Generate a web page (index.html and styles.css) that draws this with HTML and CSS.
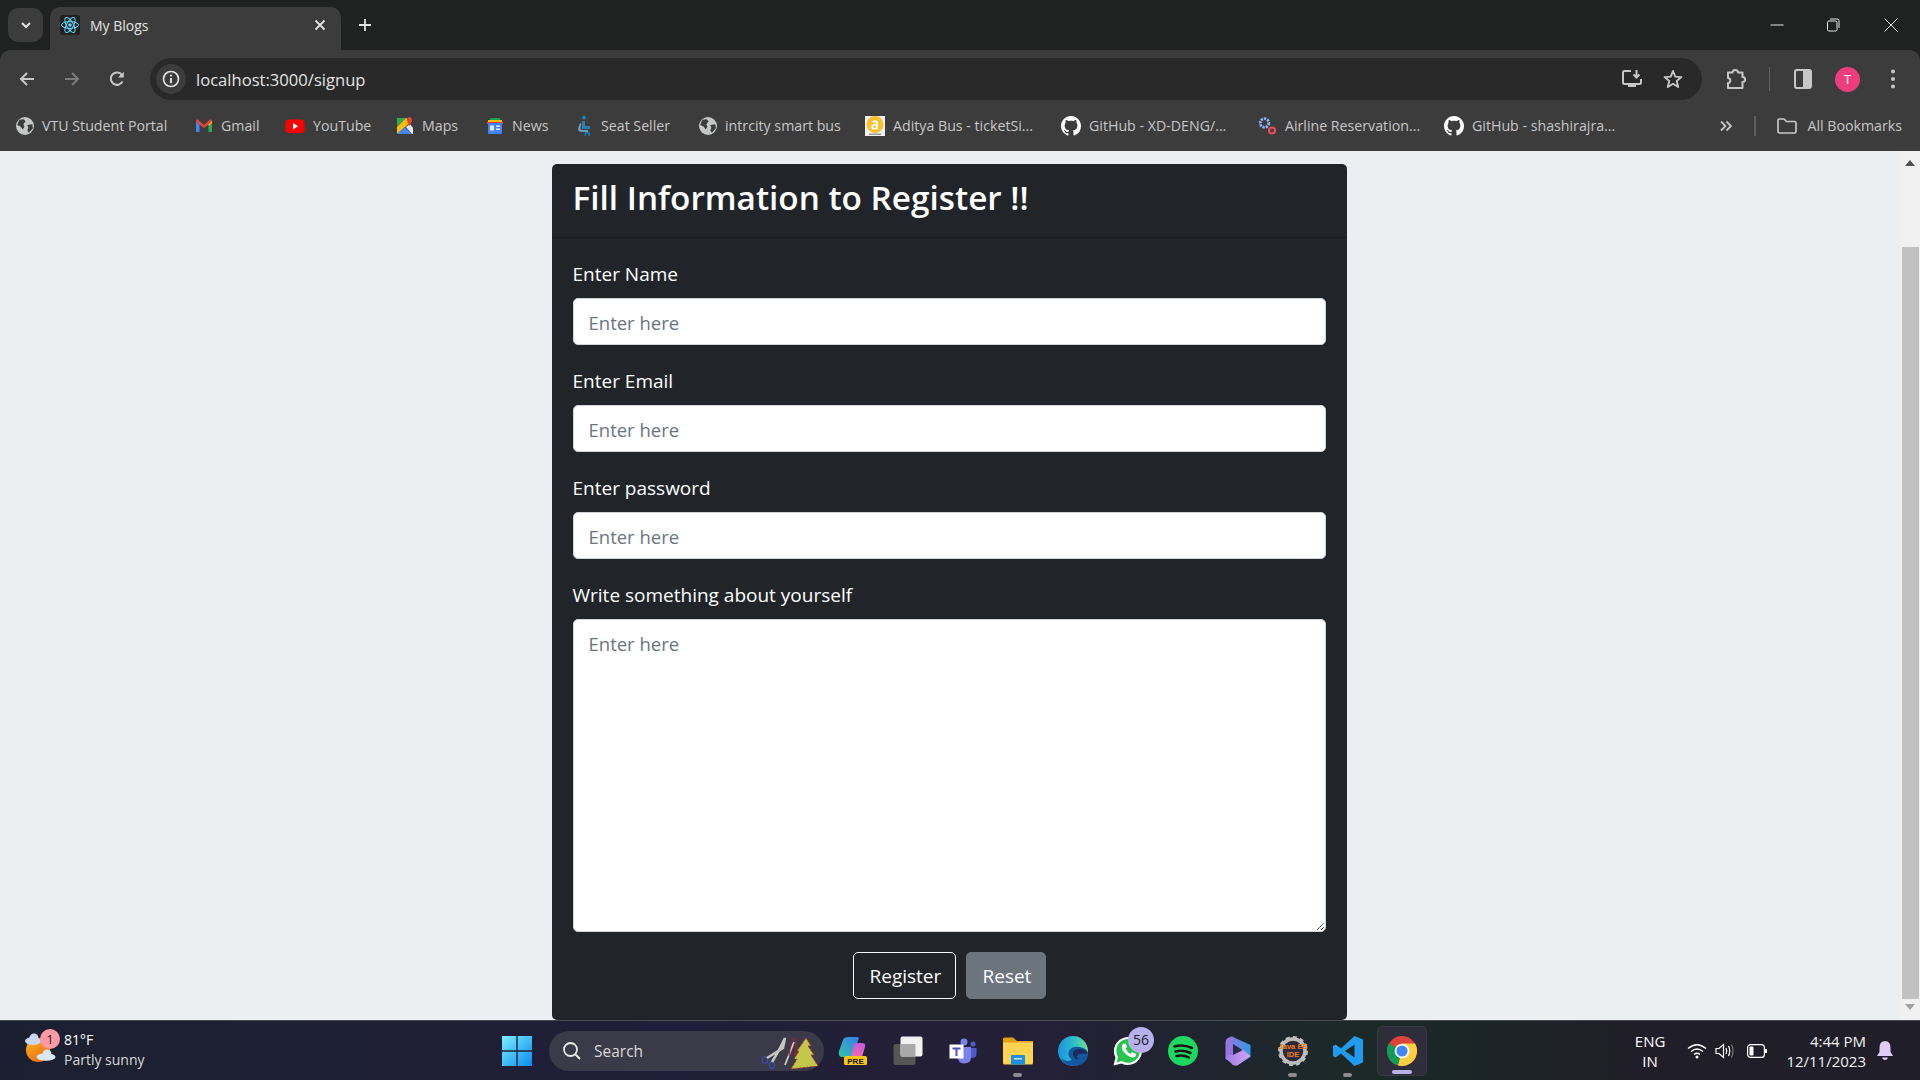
FILE: index.html
```html
<!DOCTYPE html>
<html>
<head>
<title>My Blogs</title>
<link rel="stylesheet" href="styles.css">
</head>
<body>
<svg class="defs" width="0" height="0">
	<symbol id="globe" viewBox="0 0 16 16">
		<circle cx="8" cy="8" r="8" fill="#c4c7c5"/>
		<path d="M3 2.5 L7 2 L8.5 4 L6.5 6.5 L7.5 8.5 L6 11 L4 8.5 L1 7 Z M10 7 L14.5 6.5 L15 10 L11.5 14 L10 12 L11 9.5 Z" fill="#3c3c3c"/>
	</symbol>
	<symbol id="github" viewBox="0 0 16 16">
		<path fill="#fff" d="M8 0C3.58 0 0 3.58 0 8c0 3.54 2.29 6.53 5.47 7.59.4.07.55-.17.55-.38 0-.19-.01-.82-.01-1.49-2.01.37-2.53-.49-2.69-.94-.09-.23-.48-.94-.82-1.13-.28-.15-.68-.52-.01-.53.63-.01 1.08.58 1.23.82.72 1.21 1.87.87 2.33.66.07-.52.28-.87.51-1.07-1.78-.2-3.64-.89-3.64-3.95 0-.87.31-1.59.82-2.15-.08-.2-.36-1.02.08-2.12 0 0 .67-.21 2.2.82.64-.18 1.32-.27 2-.27s1.36.09 2 .27c1.53-1.04 2.2-.82 2.2-.82.44 1.1.16 1.92.08 2.12.51.56.82 1.27.82 2.15 0 3.07-1.87 3.75-3.65 3.95.29.25.54.73.54 1.48 0 1.07-.01 1.93-.01 2.2 0 .21.15.46.55.38A8.01 8.01 0 0 0 16 8c0-4.42-3.58-8-8-8z"/>
	</symbol>
</svg>

<div class="tabstrip">
	<div class="tab-search">
		<svg width="14" height="14" viewBox="0 0 14 14"><path d="M3 5 L7 9 L11 5" fill="none" stroke="#e3e3e3" stroke-width="2"/></svg>
	</div>
	<div class="tab">
		<svg class="tab-icon" width="20" height="20" viewBox="0 0 20 20">
			<rect width="20" height="20" rx="2" fill="#222"/>
			<g fill="none" stroke="#61dafb" stroke-width="1">
				<ellipse cx="10" cy="10" rx="8.5" ry="3.4"/>
				<ellipse cx="10" cy="10" rx="8.5" ry="3.4" transform="rotate(60 10 10)"/>
				<ellipse cx="10" cy="10" rx="8.5" ry="3.4" transform="rotate(120 10 10)"/>
			</g>
			<circle cx="10" cy="10" r="1.8" fill="#61dafb"/>
		</svg>
		<span class="tab-title">My Blogs</span>
		<svg class="tab-close" width="12" height="12" viewBox="0 0 12 12"><path d="M1.5 1.5 L10.5 10.5 M10.5 1.5 L1.5 10.5" stroke="#e3e3e3" stroke-width="1.8"/></svg>
	</div>
	<svg class="new-tab" width="14" height="14" viewBox="0 0 14 14"><path d="M7 1 V13 M1 7 H13" stroke="#e3e3e3" stroke-width="1.8"/></svg>
	<div class="win-controls">
		<svg width="14" height="14" viewBox="0 0 14 14"><path d="M0.5 7 H13.5" stroke="#e8e8e8" stroke-width="1"/></svg>
		<svg width="14" height="14" viewBox="0 0 14 14"><rect x="1.5" y="3" width="9.5" height="10" rx="1.5" fill="none" stroke="#e8e8e8"/><path d="M4 1 H11.5 Q13 1 13 2.5 V10" fill="none" stroke="#e8e8e8"/></svg>
		<svg class="win-close" width="14" height="14" viewBox="0 0 14 14"><path d="M0.5 0.5 L13.5 13.5 M13.5 0.5 L0.5 13.5" stroke="#e8e8e8" stroke-width="1"/></svg>
	</div>
</div>

<div class="toolbar">
	<div class="nav-btns">
		<svg width="18" height="18" viewBox="0 0 18 18"><path d="M16 9 H3 M9 3 L3 9 L9 15" fill="none" stroke="#c7c7c7" stroke-width="2"/></svg>
		<svg width="18" height="18" viewBox="0 0 18 18"><path d="M2 9 H15 M9 3 L15 9 L9 15" fill="none" stroke="#7b7b7b" stroke-width="2"/></svg>
		<svg width="18" height="18" viewBox="0 0 18 18"><path d="M14.5 11.5 A6.2 6.2 0 1 1 14 5" fill="none" stroke="#c7c7c7" stroke-width="2"/><path d="M15.8 1.8 V7.5 H10" fill="#c7c7c7"/></svg>
	</div>
	<div class="omnibox">
		<span class="site-info">
			<svg width="18" height="18" viewBox="0 0 18 18"><circle cx="9" cy="9" r="7.5" fill="none" stroke="#e3e3e3" stroke-width="1.7"/><path d="M9 8 V13.2" stroke="#e3e3e3" stroke-width="1.9"/><circle cx="9" cy="5.5" r="1.1" fill="#e3e3e3"/></svg>
		</span>
		<span class="url">localhost:3000/signup</span>
		<span class="omni-icons">
			<svg width="22" height="22" viewBox="0 0 22 22"><path d="M10 3 H3.5 Q2 3 2 4.5 V14.5 Q2 16 3.5 16 H18.5 Q20 16 20 14.5 V11" fill="none" stroke="#c7c7c7" stroke-width="2"/><path d="M7 19 H15 V16.5 H7 Z" fill="#c7c7c7"/><path d="M15.5 2 V9 M12.5 6.5 L15.5 9.5 L18.5 6.5" fill="none" stroke="#c7c7c7" stroke-width="2"/></svg>
			<svg width="20" height="20" viewBox="0 0 20 20"><path d="M10 2 L12.3 7.6 L18.4 8.1 L13.7 12 L15.2 18 L10 14.8 L4.8 18 L6.3 12 L1.6 8.1 L7.7 7.6 Z" fill="none" stroke="#c7c7c7" stroke-width="1.9" stroke-linejoin="round"/></svg>
		</span>
	</div>
	<div class="tool-icons">
		<svg class="ti-ext" width="20" height="22" viewBox="0 0 20 22"><path d="M2 4.5 H6.5 C6.5 1 12 1 12 4.5 H16.5 V9 C20 9 20 14 16.5 14 V20 H2 V15 C5 15 5 10 2 10 Z" fill="none" stroke="#c7c7c7" stroke-width="2" stroke-linejoin="round"/></svg>
		<span class="ti-sep"></span>
		<svg class="ti-panel" width="18" height="20" viewBox="0 0 18 20"><rect x="1" y="1" width="16" height="18" rx="2" fill="none" stroke="#c7c7c7" stroke-width="2"/><rect x="9" y="1" width="8" height="18" fill="#c7c7c7"/></svg>
		<span class="avatar">T</span>
		<svg class="ti-dots" width="6" height="20" viewBox="0 0 6 20"><circle cx="3" cy="2.5" r="2" fill="#c7c7c7"/><circle cx="3" cy="10" r="2" fill="#c7c7c7"/><circle cx="3" cy="17.5" r="2" fill="#c7c7c7"/></svg>
	</div>
</div>

<div class="bookmarks">
	<div class="bm bm-vtu"><svg width="18" height="18"><use href="#globe"/></svg><span>VTU Student Portal</span></div>
	<div class="bm bm-gmail">
		<svg width="18" height="18" viewBox="0 0 18 18"><path d="M1 4 V15 H4.5 V7 Z" fill="#4285f4"/><path d="M17 4 V15 H13.5 V7 Z" fill="#34a853"/><path d="M1 4 Q1 2 3 2.500 L9 8 L15 2.500 Q17 2 17 4 L13.500 7.500 L9 11 L4.500 7.500 Z" fill="#ea4335"/><path d="M13.500 7.500 L17 4 L17 6 L13.500 9 Z" fill="#fbbc04"/></svg>
		<span>Gmail</span>
	</div>
	<div class="bm bm-yt">
		<svg width="20" height="18" viewBox="0 0 20 18"><rect x="0.500" y="2.500" width="19" height="13.500" rx="3.500" fill="#f00"/><path d="M8 6 L13 9.200 L8 12.400 Z" fill="#fff"/></svg>
		<span>YouTube</span>
	</div>
	<div class="bm bm-maps">
		<svg width="18" height="18" viewBox="0 0 18 18"><path d="M1 1 H10 L1 10 Z" fill="#34a853"/><path d="M10 1 L1 10 V17 L16 4 Z" fill="#fbbc04"/><path d="M1 17 H16 L9 10 Z" fill="#4285f4"/><path d="M16 17 L10 10 L14 7 L17 11 V17 Z" fill="#e8eaed"/><path d="M13.500 0 C10.500 0 10 3.500 13.500 9 C17 3.500 16.500 0 13.500 0 Z" fill="#ea4335"/></svg>
		<span>Maps</span>
	</div>
	<div class="bm bm-news">
		<svg width="18" height="18" viewBox="0 0 18 18"><path d="M4 1 H14 V5 H4 Z" fill="#0c9d58"/><path d="M2 3 H16 V6 H2 Z" fill="#fbbc04"/><path d="M0.500 5 L17.500 5 L16.500 7 L1.500 7 Z" fill="#ea4335"/><rect x="2" y="6" width="14" height="11" rx="1" fill="#4285f4"/><rect x="4" y="8.500" width="4" height="5" fill="#e8eaed"/><rect x="10" y="8.500" width="4" height="1.500" fill="#e8eaed"/><rect x="10" y="11.500" width="4" height="1.500" fill="#e8eaed"/></svg>
		<span>News</span>
	</div>
	<div class="bm bm-seat">
		<svg width="18" height="22" viewBox="0 0 18 22"><circle cx="9" cy="2.500" r="2" fill="#2a7fb0"/><path d="M7 6 H10 V11 H15 V14 H7 Z" fill="#2a7fb0"/><path d="M5 8 L3 14 Q3 17 7 17 H13 V15 H7 Q5 15 5.500 13 L6.500 9 Z" fill="#6a9fbf"/><path d="M10 17 H15 V21 H13 V19 H11 V21 H9 Z" fill="#1f6f9f"/></svg>
		<span>Seat Seller</span>
	</div>
	<div class="bm bm-intr"><svg width="18" height="18"><use href="#globe"/></svg><span>intrcity smart bus</span></div>
	<div class="bm bm-aditya">
		<svg width="20" height="20" viewBox="0 0 20 20"><rect width="20" height="20" fill="#f1f1f1"/><circle cx="10" cy="8.500" r="8.500" fill="#fbc02d"/><path d="M7.500 6 Q10 4.500 12 6 V13 M12 9 Q7 8.500 7 11 Q7 13.500 12 12" fill="none" stroke="#fff" stroke-width="1.800"/><rect x="4" y="17.500" width="12" height="1.500" fill="#999"/></svg>
		<span>Aditya Bus - ticketSi...</span>
	</div>
	<div class="bm bm-gh1"><svg width="20" height="20"><use href="#github"/></svg><span>GitHub - XD-DENG/...</span></div>
	<div class="bm bm-air">
		<svg width="20" height="20" viewBox="0 0 20 20"><circle cx="7.500" cy="7" r="4.300" fill="none" stroke="#8ab4f8" stroke-width="2.800" stroke-dasharray="2.200 1"/><circle cx="15" cy="14.500" r="3" fill="none" stroke="#ea4d5f" stroke-width="2.200"/></svg>
		<span>Airline Reservation...</span>
	</div>
	<div class="bm bm-gh2"><svg width="20" height="20"><use href="#github"/></svg><span>GitHub - shashirajra...</span></div>
	<div class="bm-end">
		<svg width="14" height="14" viewBox="0 0 14 14"><path d="M2 2.500 L6.500 7 L2 11.500 M7.500 2.500 L12 7 L7.500 11.500" fill="none" stroke="#c7c7c7" stroke-width="1.800"/></svg>
		<span class="bm-sep"></span>
		<svg width="20" height="18" viewBox="0 0 20 18"><path d="M1 3.500 Q1 2 2.500 2 H7 L9.500 4.500 H17.500 Q19 4.500 19 6 V14.500 Q19 16 17.500 16 H2.500 Q1 16 1 14.500 Z" fill="none" stroke="#c7c7c7" stroke-width="1.700"/></svg>
		<span class="bm-all">All Bookmarks</span>
	</div>
</div>

<div class="viewport">
	<div class="page">
		<div class="card">
			<div class="card-header">
				<h1>Fill Information to Register !!</h1>
			</div>
			<form class="card-body">
				<div class="field">
					<label>Enter Name</label>
					<input type="text" placeholder="Enter here">
				</div>
				<div class="field">
					<label>Enter Email</label>
					<input type="text" placeholder="Enter here">
				</div>
				<div class="field">
					<label>Enter password</label>
					<input type="text" placeholder="Enter here">
				</div>
				<div class="field">
					<label>Write something about yourself</label>
					<textarea placeholder="Enter here"></textarea>
				</div>
				<div class="form-btns">
					<button type="button" class="btn btn-outline">Register</button>
					<button type="button" class="btn btn-grey">Reset</button>
				</div>
			</form>
		</div>
	</div>
	<div class="scrollbar">
		<span class="arrow-up"></span>
		<span class="thumb"></span>
		<span class="arrow-down"></span>
	</div>
</div>

<div class="taskbar">
	<div class="weather">
		<svg class="weather-icon" width="38" height="40" viewBox="0 0 38 40">
			<defs><linearGradient id="sun" x1="0" y1="0" x2="0.700" y2="1"><stop offset="0" stop-color="#fbb81f"/><stop offset="1" stop-color="#ea6a10"/></linearGradient></defs>
			<circle cx="17" cy="20" r="12" fill="url(#sun)"/>
			<g fill="#c9d8f0">
				<ellipse cx="12" cy="11" rx="8" ry="4"/>
				<circle cx="13" cy="8" r="4.500"/>
			</g>
			<g fill="#dbe6f7">
				<ellipse cx="25" cy="27" rx="9.500" ry="3.800"/>
				<circle cx="26" cy="24" r="4.500"/>
			</g>
		</svg>
		<span class="weather-badge">1</span>
		<div class="weather-text">
			<span class="temp">81°F</span>
			<span class="cond">Partly sunny</span>
		</div>
	</div>
	<div class="task-center">
		<svg class="win-logo" width="30" height="30" viewBox="0 0 30 30">
			<defs><linearGradient id="wl" x1="0" y1="0" x2="1" y2="1"><stop offset="0" stop-color="#7aeefc"/><stop offset="1" stop-color="#0b8cf0"/></linearGradient></defs>
			<path d="M0 0 H14.300 V14.300 H0 Z M15.700 0 H30 V14.300 H15.700 Z M0 15.700 H14.300 V30 H0 Z M15.700 15.700 H30 V30 H15.700 Z" fill="url(#wl)"/>
		</svg>
		<div class="search">
			<svg width="20" height="20" viewBox="0 0 20 20"><circle cx="8.500" cy="8.500" r="6.500" fill="none" stroke="#e8e8e8" stroke-width="1.800"/><path d="M13 13 L18 18" stroke="#e8e8e8" stroke-width="2"/></svg>
			<span>Search</span>
			<svg class="search-art" width="60" height="38" viewBox="0 0 60 38">
				<circle cx="4" cy="28" r="3" fill="none" stroke="#3f4a9c" stroke-width="1.500"/>
				<ellipse cx="11" cy="33" rx="2.500" ry="3.500" fill="none" stroke="#3f4a9c" stroke-width="1.500"/>
				<path d="M6 26 L22 16 L24 6 L17 20 L11 30" fill="none" stroke="#c9c5c0" stroke-width="2.500"/>
				<path d="M24 33 L33 10" stroke="#cfc7c0" stroke-width="1.800"/>
				<path d="M28 24 Q31 0 35 8 Q36 18 33 24 L40 18" fill="none" stroke="#a02030" stroke-width="1"/>
				<path d="M45 6 L50 14 L47 14 L53 23 L50 23 L57 34 L30 37 L36 27 L33 27 L38 19 L36 19 Z" fill="#c4c84a" stroke="#b03030" stroke-width="1" stroke-dasharray="2 1.500"/>
			</svg>
		</div>
		<div class="task-apps">
			<span class="app">
				<svg width="30" height="30" viewBox="0 0 30 30">
					<defs>
						<linearGradient id="cp1" x1="0" y1="1" x2="1" y2="0"><stop offset="0" stop-color="#2cc4a8"/><stop offset="1" stop-color="#3a7cf0"/></linearGradient>
						<linearGradient id="cp2" x1="0" y1="0" x2="0" y2="1"><stop offset="0" stop-color="#c45ae0"/><stop offset="1" stop-color="#f06aa8"/></linearGradient>
					</defs>
					<path d="M1 15 L5 4 Q6 1 10 1 H19 Q22 1 20 5 L14 19 Q13 21 9 21 H3 Q0 20 1 15 Z" fill="url(#cp1)"/>
					<path d="M16 8 Q17 7 20 7 H24 Q28 7 27 11 L24 21 H13 Z" fill="url(#cp2)"/>
					<rect x="6" y="20" width="23" height="9" rx="1.500" fill="#f5c518"/>
					<text x="17.500" y="27.500" class="pre">PRE</text>
				</svg>
			</span>
			<span class="app">
				<svg width="30" height="30" viewBox="0 0 30 30"><rect x="0.500" y="8" width="22" height="21" rx="2" fill="#555"/><rect x="7.500" y="0.500" width="22" height="20" rx="2" fill="#f2f2f2"/><rect x="7.500" y="8" width="15" height="12.500" rx="1" fill="#a9a9a9"/></svg>
			</span>
			<span class="app">
				<svg width="28" height="26" viewBox="0 0 28 26"><circle cx="15" cy="4" r="3.500" fill="#7b83eb"/><circle cx="24" cy="6" r="2.600" fill="#5059c9"/><path d="M19 10 H27.500 V16 Q27.500 20 23 20 Q20 20 19 18 Z" fill="#5059c9"/><path d="M9 9 H22 V19 Q22 25.500 15 25.500 Q9 25.500 9 19 Z" fill="#7b83eb"/><rect x="0.500" y="6.500" width="14" height="14" fill="#fff"/><path d="M3.500 9.500 H11.500 V11.500 H8.500 V18 H6.500 V11.500 H3.500 Z" fill="#4b53bc"/></svg>
			</span>
			<span class="app">
				<svg width="30" height="28" viewBox="0 0 30 28"><path d="M0 2 Q0 0.500 1.500 0.500 H10 L14 4 H30 V12 H0 Z" fill="#e0a30e"/><path d="M0 5.500 H30 V26 Q30 27.500 28.500 27.500 H1.500 Q0 27.500 0 26 Z" fill="#fcd452"/><path d="M8 19 Q8 18 9 18 H21 Q22 18 22 19 V27.500 H8 Z" fill="#1d8fe0"/><rect x="11" y="21" width="8" height="1.500" fill="#bfe3ff"/></svg>
				<span class="app-dot"></span>
			</span>
			<span class="app">
				<svg width="30" height="30" viewBox="0 0 30 30">
					<defs>
						<linearGradient id="eg" x1="0" y1="0.300" x2="1" y2="0.300"><stop offset="0" stop-color="#1a8fe0"/><stop offset="0.550" stop-color="#2fc0c8"/><stop offset="1" stop-color="#6fe08a"/></linearGradient>
					</defs>
					<circle cx="15" cy="15" r="15" fill="url(#eg)"/>
					<path d="M30 17 Q30 27 20 29.500 Q8 32 3 22 Q7 27 14 24 Q9 20 11 15 Q14 10 21 11 Q29 12 30 17 Z" fill="#12589f"/>
					<path d="M30 17.500 Q28 13 21 13 Q14 14 15 19 Q16 23 21 23.500 Q17 20.500 20 18.500 Q25 17 30 17.500 Z" fill="#1b2c5a"/>
				</svg>
			</span>
			<span class="app">
				<svg width="30" height="30" viewBox="0 0 30 30"><path d="M0.500 29.500 L2.500 21.500 A14 14 0 1 1 8.500 27.500 Z" fill="#fff"/><path d="M3.500 26.500 L5 21 A11.800 11.800 0 1 1 9 25 Z" fill="#28c44f"/><path d="M10 8 Q8 10 9 13 Q12 19.500 19 21.500 Q22 22 23 19.500 L23 18 L19 16 L17.500 18 Q14 16 12.500 12.500 L14 11 L12.500 7.500 Z" fill="#fff"/></svg>
				<span class="wa-badge">56</span>
			</span>
			<span class="app">
				<svg width="30" height="30" viewBox="0 0 30 30"><circle cx="15" cy="15" r="15" fill="#1ed760"/><path d="M6.500 10.500 Q15 8 24 12 M7.500 15.500 Q15 13.500 22.500 17 M8.500 20 Q15 18.500 21 21.500" fill="none" stroke="#191414" stroke-width="2.500" stroke-linecap="round"/></svg>
			</span>
			<span class="app">
				<svg width="26" height="30" viewBox="0 0 26 30">
					<defs>
						<linearGradient id="cop" x1="0" y1="0" x2="1" y2="0"><stop offset="0" stop-color="#a56fe0"/><stop offset="1" stop-color="#2f9ae6"/></linearGradient>
						<linearGradient id="cop2" x1="0" y1="0" x2="1" y2="0"><stop offset="0" stop-color="#9b7be6"/><stop offset="1" stop-color="#d8a6f0"/></linearGradient>
					</defs>
					<path d="M0.500 7 Q0.500 3 3 2 L6 0.500 Q8 0 9 1.500 L25.500 9 V21 L12 29.500 L0.500 23 Z" fill="url(#cop)"/>
					<path d="M8 8 L16 13 Q18 15 16 17 L8 21 Z" fill="#2c2a48"/>
					<path d="M0.500 22 Q3 18 8 19 L18 14 L25.500 20 L13 29 Q10 30 8 29 Z" fill="url(#cop2)"/>
				</svg>
			</span>
			<span class="app">
				<svg width="30" height="30" viewBox="0 0 30 30"><circle cx="15" cy="15" r="12" fill="#2c2a38" stroke="#bdbdbd" stroke-width="3.500"/><circle cx="15" cy="15" r="13.500" fill="none" stroke="#bdbdbd" stroke-width="3" stroke-dasharray="4 3"/><text x="15" y="12.500" class="ee">Java EE</text><text x="15" y="21" class="ee">IDE</text></svg>
				<span class="app-dot"></span>
			</span>
			<span class="app">
				<svg width="30" height="30" viewBox="0 0 30 30"><path d="M21.500 0 L30 3.500 V26.500 L21.500 30 L8 17.500 L2.500 21.500 L0 20 V10 L2.500 8.500 L8 12.500 Z M21.500 8.500 L12 15 L21.500 21.500 Z" fill="#1f9cf0" fill-rule="evenodd"/></svg>
				<span class="app-dot"></span>
			</span>
			<span class="app app-active">
				<svg width="30" height="30" viewBox="0 0 30 30"><circle cx="15" cy="15" r="15" fill="#db4437"/><path d="M15 15 L2 7.500 A15 15 0 0 0 11 29.500 Z" fill="#0f9d58"/><path d="M15 15 L11 29.500 A15 15 0 0 0 28 7.500 L15 7.500 Z" fill="#ffcd40"/><circle cx="15" cy="15" r="7.300" fill="#fff"/><circle cx="15" cy="15" r="5.600" fill="#4285f4"/></svg>
				<span class="app-bar"></span>
			</span>
		</div>
	</div>
	<div class="tray">
		<div class="lang"><span>ENG</span><span>IN</span></div>
		<svg class="tray-wifi" width="20" height="16" viewBox="0 0 20 16"><path d="M1 5.500 Q10 -2 19 5.500 M4 8.500 Q10 3.500 16 8.500 M7 11.500 Q10 9 13 11.500" fill="none" stroke="#fff" stroke-width="1.300"/><circle cx="10" cy="14" r="1.500" fill="#fff"/></svg>
		<svg class="tray-vol" width="20" height="16" viewBox="0 0 20 16"><path d="M1 5.500 H4 L8.500 1.500 V14.500 L4 10.500 H1 Z" fill="none" stroke="#fff" stroke-width="1.200"/><path d="M11 5 Q12.500 8 11 11 M13.500 3 Q16 8 13.500 13" fill="none" stroke="#fff" stroke-width="1.200"/><path d="M16.500 1.500 Q19.500 8 16.500 14.500" fill="none" stroke="#777" stroke-width="1.200"/></svg>
		<svg class="tray-bat" width="20" height="14" viewBox="0 0 20 14"><rect x="0.600" y="0.600" width="16.800" height="12.800" rx="3" fill="none" stroke="#fff" stroke-width="1.200"/><rect x="2.500" y="2.500" width="4" height="9" rx="1" fill="#fff"/><rect x="18" y="5" width="2" height="4" fill="#fff"/></svg>
		<div class="clock"><span>4:44 PM</span><span>12/11/2023</span></div>
		<svg class="tray-bell" width="16" height="20" viewBox="0 0 16 20"><path d="M8 0 Q13.500 0 13.500 7 V11 L16 15 H0 L2.500 11 V7 Q2.500 0 8 0 Z" fill="#e0cdf5"/><path d="M5 16.500 H11 Q10 19 8 19 Q6 19 5 16.500 Z" fill="#e0cdf5"/></svg>
	</div>
</div>
</body>
</html>
```

FILE: styles.css
```css
* {
	box-sizing: border-box;
}

html, body {
	margin: 0;
	padding: 0;
	height: 100%;
	overflow: hidden;
}

body {
	display: flex;
	flex-direction: column;
	background: #202221;
	font-family: "Open Sans", "Noto Sans", sans-serif;
}

.defs {
	position: absolute;
}

/* tab strip */
.tabstrip {
	height: 50px;
	flex: none;
	display: flex;
	align-items: flex-end;
	background: #202221;
	padding-left: 8px;
}

.tab-search {
	width: 35px;
	height: 34px;
	margin-bottom: 8px;
	border-radius: 10px;
	background: #3c3c3c;
	display: flex;
	align-items: center;
	justify-content: center;
}

.tab {
	width: 291px;
	height: 43px;
	margin-left: 7px;
	border-radius: 10px 10px 0 0;
	background: #3c3c3c;
	display: flex;
	align-items: center;
	padding: 0 15px 7px 10px;
	color: #e3e3e3;
}

.tab-title {
	flex: 1;
	margin-left: 10px;
	font-size: 14px;
}

.new-tab {
	margin: 0 0 18px 17px;
}

.win-controls {
	margin-left: auto;
	display: flex;
	gap: 42px;
	padding-right: 22px;
	margin-bottom: 18px;
}

.win-close {
	margin-left: 2px;
}

/* toolbar */
.toolbar {
	height: 50px;
	flex: none;
	background: #3c3c3c;
	border-radius: 10px 10px 0 0;
	display: flex;
	align-items: flex-end;
}

.nav-btns {
	width: 150px;
	height: 42px;
	padding-left: 18px;
	display: flex;
	align-items: center;
	gap: 27px;
}

.omnibox {
	width: 1552px;
	height: 42px;
	background: #292929;
	border-radius: 21px;
	display: flex;
	align-items: center;
	padding: 0 19px 0 6px;
}

.site-info {
	width: 30px;
	height: 30px;
	border-radius: 50%;
	background: #3c3c3c;
	display: flex;
	align-items: center;
	justify-content: center;
}

.url {
	margin-left: 10px;
	font-size: 16.600px;
	color: #e3e3e3;
}

.omni-icons {
	margin-left: auto;
	display: flex;
	align-items: center;
	gap: 20px;
}

.tool-icons {
	flex: 1;
	height: 42px;
	display: flex;
	align-items: center;
	padding-left: 24px;
}

.ti-sep {
	width: 1px;
	height: 24px;
	margin-left: 23px;
	background: #5f5f5f;
}

.ti-panel {
	margin-left: 24px;
}

.avatar {
	width: 25px;
	height: 25px;
	margin-left: 23px;
	border-radius: 50%;
	background: #ee3d7d;
	color: #fff;
	font-size: 13px;
	display: flex;
	align-items: center;
	justify-content: center;
}

.ti-dots {
	margin-left: 30px;
}

/* bookmarks */
.bookmarks {
	height: 51px;
	flex: none;
	background: #3c3c3c;
	display: flex;
	align-items: center;
	font-size: 14.200px;
	color: #c7c7c7;
	padding-left: 16px;
}

.bm {
	display: flex;
	align-items: center;
	gap: 8px;
	white-space: nowrap;
}

.bm-vtu { width: 179px; }
.bm-gmail { width: 90px; }
.bm-yt { width: 111px; }
.bm-maps { width: 90px; }
.bm-news { width: 89px; }
.bm-seat { width: 124px; }
.bm-intr { width: 166px; }
.bm-aditya { width: 196px; }
.bm-gh1 { width: 196px; }
.bm-air { width: 187px; }
.bm-gh2 { width: 200px; }

.bm-end {
	margin-left: auto;
	display: flex;
	align-items: center;
	padding-right: 18px;
}

.bm-sep {
	width: 2px;
	height: 20px;
	margin: 0 21px;
	background: #5f5f5f;
}

.bm-all {
	margin-left: 10px;
}

/* page */
.viewport {
	flex: 1;
	min-height: 0;
	display: flex;
	background: #ebeff2;
}

.page {
	flex: 1;
	display: flex;
	justify-content: center;
	padding: 13px 2px 0 0;
	overflow: hidden;
}

.card {
	width: 795px;
	height: 856px;
	background: #212529;
	border-radius: 5px;
	color: #fff;
}

.card-header {
	height: 74px;
	padding: 10px 21px 0;
	border-bottom: 1px solid #1b1f22;
}

.card-header h1 {
	margin: 0;
	font-size: 33.300px;
	line-height: 46px;
	font-weight: 600;
}

.card-body {
	padding: 22px 21px 0;
	display: flex;
	flex-direction: column;
	gap: 22px;
}

.field {
	display: flex;
	flex-direction: column;
}

.field label {
	font-size: 19px;
	line-height: 28px;
	margin-bottom: 10px;
}

.field input, .field textarea {
	display: block;
	width: 100%;
	height: 47px;
	padding: 9px 15px 7px;
	border: 1px solid #ced4da;
	border-radius: 5px;
	background: #fff;
	font-family: inherit;
	font-size: 18.500px;
	line-height: 28px;
	outline: none;
}

.field textarea {
	height: 313px;
	padding-top: 10px;
}

.field input::placeholder, .field textarea::placeholder {
	color: #6c757d;
	opacity: 1;
}

.form-btns {
	display: flex;
	justify-content: center;
	gap: 10px;
	margin-top: -2px;
}

.btn {
	height: 47px;
	padding: 0 16px;
	border-radius: 5px;
	font-family: inherit;
	font-size: 19px;
	color: #fff;
}

.btn-outline {
	width: 103px;
	background: transparent;
	border: 1px solid #f8f9fa;
}

.btn-grey {
	width: 80px;
	background: #6c757d;
	border: 1px solid #6c757d;
}

/* scrollbar */
.scrollbar {
	width: 20px;
	flex: none;
	background: #f1f1f1;
	display: flex;
	flex-direction: column;
	align-items: center;
	padding: 9px 0 8px;
}

.arrow-up {
	width: 0;
	height: 0;
	border-left: 5px solid transparent;
	border-right: 5px solid transparent;
	border-bottom: 6px solid #505050;
}

.thumb {
	width: 17px;
	height: 752px;
	margin: 81px 0 5px;
	background: #c1c1c1;
}

.arrow-down {
	width: 0;
	height: 0;
	border-left: 5px solid transparent;
	border-right: 5px solid transparent;
	border-top: 6px solid #a3a3a3;
}

/* taskbar */
.taskbar {
	height: 60px;
	flex: none;
	display: flex;
	align-items: center;
	position: relative;
	border-top: 1px solid #4a4a52;
	background: linear-gradient(90deg, #1b2030 0%, #201e38 35%, #242036 55%, #1a2a26 72%, #201e28 85%, #201e28 100%);
	color: #fff;
}

.weather {
	width: 502px;
	flex: none;
	display: flex;
	align-items: center;
	padding-left: 21px;
	margin-top: -2px;
	position: relative;
}

.weather-badge {
	position: absolute;
	left: 40px;
	top: -1px;
	width: 20px;
	height: 20px;
	border-radius: 50%;
	background: #ff99a4;
	color: #222;
	font-size: 13px;
	display: flex;
	align-items: center;
	justify-content: center;
}

.weather-text {
	display: flex;
	flex-direction: column;
	margin-left: 5px;
	font-size: 14px;
	line-height: 20px;
}

.cond {
	color: #d8d8d8;
}

.task-center {
	display: flex;
	align-items: center;
}

.search {
	width: 275px;
	height: 40px;
	margin-left: 17px;
	border-radius: 20px;
	background: #3b3a48;
	display: flex;
	align-items: center;
	padding: 0 3px 0 13px;
	font-size: 15.500px;
	color: #d8d8d8;
	gap: 12px;
}

.search-art {
	margin-left: auto;
}

.task-apps {
	display: flex;
	margin-left: 1px;
}

.app {
	width: 55px;
	height: 50px;
	display: flex;
	align-items: center;
	justify-content: center;
	position: relative;
}

.app-active {
	width: 50px;
	margin-left: 2px;
	background: #2e2d3a;
	border: 1px solid #3a3946;
	border-radius: 5px;
}

.app-dot {
	position: absolute;
	left: 23px;
	bottom: -1px;
	width: 9px;
	height: 4px;
	border-radius: 2px;
	background: #8b8b90;
}

.app-bar {
	position: absolute;
	left: 14px;
	bottom: 1px;
	width: 20px;
	height: 4px;
	border-radius: 2px;
	background: #b8b0ec;
}

.wa-badge {
	position: absolute;
	left: 28px;
	top: 1px;
	width: 26px;
	height: 26px;
	border-radius: 50%;
	background: #b8b0ec;
	color: #222;
	font-size: 14px;
	display: flex;
	align-items: center;
	justify-content: center;
}

.pre {
	font-family: "Liberation Sans", sans-serif;
	font-size: 8px;
	font-weight: 700;
	fill: #1a1a1a;
	text-anchor: middle;
}

.ee {
	font-family: "Liberation Sans", sans-serif;
	font-size: 7.500px;
	font-weight: 700;
	fill: #f08010;
	text-anchor: middle;
}

.tray {
	margin-left: auto;
	display: flex;
	align-items: center;
	padding-right: 27px;
	font-size: 15px;
	line-height: 20px;
}

.lang, .clock {
	display: flex;
	flex-direction: column;
}

.lang {
	align-items: center;
	margin-right: 22px;
}

.tray-vol {
	margin-left: 8px;
}

.tray-bat {
	margin-left: 12px;
}

.clock {
	align-items: flex-end;
	margin: 0 11px 0 19px;
	color: #f2f2f2;
}
```
